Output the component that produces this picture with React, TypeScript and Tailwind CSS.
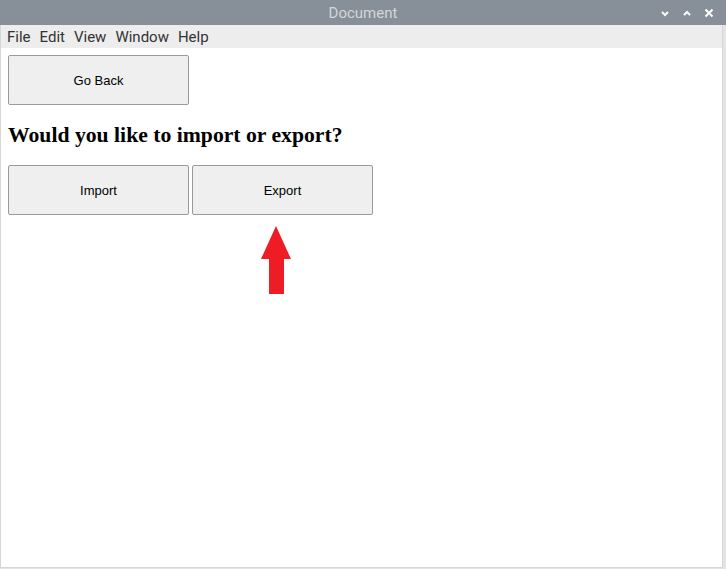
import React from "react"

// fenêtre principale
function App() {
  return (
    <div className="w-[726px] h-[569px] bg-[#e4e4e4] flex flex-col overflow-hidden">
      <div className="h-[25px] bg-[#878f98] flex items-center relative shrink-0">
        <span className="flex-1 text-center text-[15px] pt-[2px] text-[#d3d7db] font-['Roboto',sans-serif]">Document</span>
        <div className="absolute right-[12px] top-[6px] flex gap-[12px] text-white">
          <svg width="10" height="14" viewBox="0 0 10 14"><path d="M2 6 L5 9 L8 6" stroke="#fff" strokeWidth="2" fill="none" /></svg>
          <svg width="10" height="14" viewBox="0 0 10 14"><path d="M2 9 L5 6 L8 9" stroke="#fff" strokeWidth="2" fill="none" /></svg>
          <svg width="10" height="14" viewBox="0 0 10 14"><path d="M1.5 3.5 L8.5 10.5 M8.5 3.5 L1.5 10.5" stroke="#fff" strokeWidth="2" fill="none" /></svg>
        </div>
      </div>
      <div className="mr-[3px] flex-1 flex flex-col bg-white border-x border-b border-[#d6d6d6] mb-[1px]">
        <div className="h-[23px] bg-[#ededed] flex items-center px-[6px] pt-[2px] gap-[9px] text-[15px] text-[#333] font-['Roboto',sans-serif] shrink-0">
          <span>File</span>
          <span>Edit</span>
          <span>View</span>
          <span>Window</span>
          <span>Help</span>
        </div>
        <div className="pl-[7px] pt-[7px] font-['Liberation_Sans',sans-serif]">
          <button className="w-[181px] h-[50px] pt-[1px] bg-[#efefef] border border-[#9a9a9a] rounded-[2px] text-[13px] text-black">Go Back</button>
          <h1 className="mt-[17px] text-[21.7px] leading-[26px] font-bold text-black font-['Liberation_Serif',serif]">Would you like to import or export?</h1>
          <div className="mt-[17px] flex gap-[3px]">
            <button className="w-[181px] h-[50px] pt-[1px] bg-[#efefef] border border-[#9a9a9a] rounded-[2px] text-[13px] text-black">Import</button>
            <button className="w-[181px] h-[50px] pt-[1px] bg-[#efefef] border border-[#9a9a9a] rounded-[2px] text-[13px] text-black">Export</button>
          </div>
          <div className="mt-[11px] ml-[253px]">
            <svg width="31" height="69" viewBox="0 0 31 69">
              <path d="M15 0 L30 33 L23 33 L23 68 L8 68 L8 33 L0 33 Z" fill="#ee1c25" />
            </svg>
          </div>
        </div>
      </div>
    </div>
  )
}

export default App
